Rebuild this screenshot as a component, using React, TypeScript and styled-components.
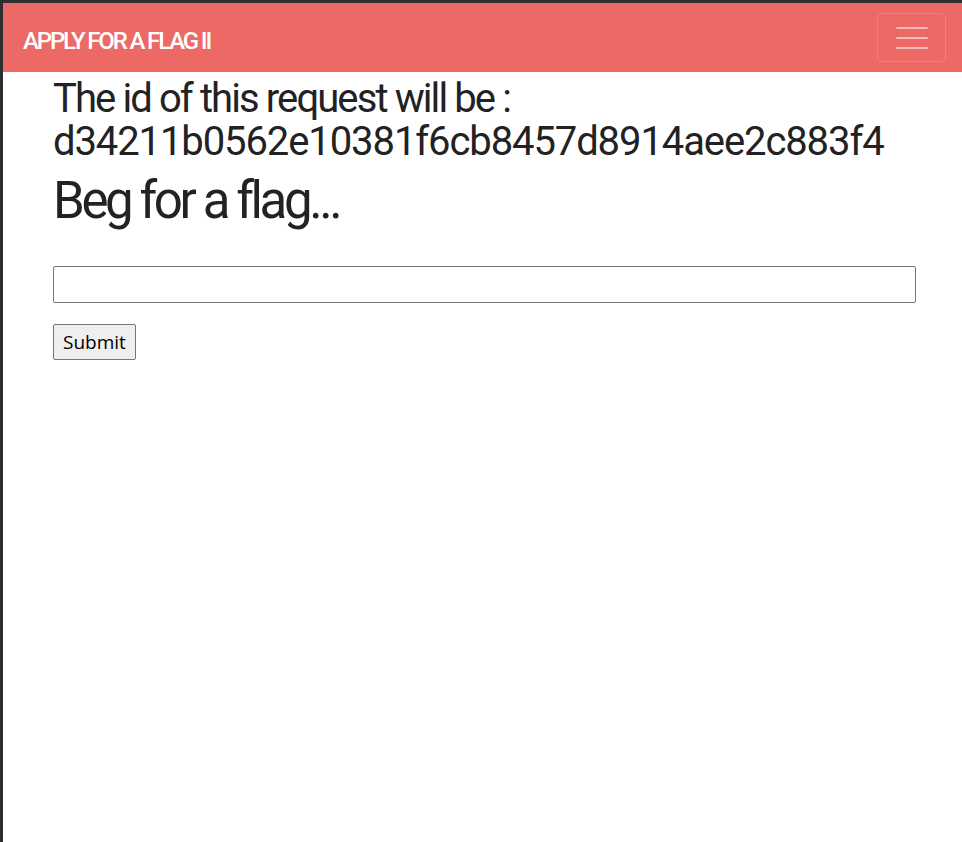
import React from 'react';
import styled, { createGlobalStyle } from 'styled-components';

const GlobalStyle = createGlobalStyle`
  html, body {
    margin: 0;
    padding: 0;
    background: #2e2e2e;
  }
`;

const Frame = styled.div`
  padding: 3px 0 0 3px;
  height: 842px;
  box-sizing: border-box;
  background: #2e2e2e;
`;

const Window = styled.div`
  background: #ffffff;
  height: 100%;
  display: flex;
  flex-direction: column;
`;

const NavBar = styled.nav`
  height: 69px;
  background: #ec6966;
  display: flex;
  align-items: center;
  justify-content: space-between;
  padding: 0 16px 0 20px;
  box-sizing: border-box;
`;

const Brand = styled.a`
  color: #ffffff;
  font-family: "Roboto", "Liberation Sans", sans-serif;
  font-size: 24px;
  font-weight: 500;
  letter-spacing: -2.15px;
  text-decoration: none;
  padding-top: 6px;
`;

const Toggler = styled.button`
  width: 69px;
  height: 49px;
  border: 1px solid rgba(255, 255, 255, 0.15);
  border-radius: 5px;
  background: transparent;
  display: flex;
  align-items: center;
  justify-content: center;
  padding: 0;
`;

const Content = styled.main`
  padding: 0 46px 0 50px;
  display: flex;
  flex-direction: column;
`;

const Heading = styled.h3<{ $size: number; $gap: number; $track: number }>`
  margin: ${(p) => p.$gap}px 0 0;
  color: #222222;
  font-family: "Roboto", "Liberation Sans", sans-serif;
  font-weight: 400;
  font-size: ${(p) => p.$size}px;
  letter-spacing: ${(p) => p.$track}px;
  line-height: ${(p) => Math.round(p.$size * 1.07)}px;
`;

const Line = styled.span<{ $track: number }>`
  display: block;
  letter-spacing: ${(p) => p.$track}px;
`;

const Form = styled.form`
  display: flex;
  flex-direction: column;
  align-items: flex-start;
  gap: 21px;
  margin-top: 38px;
`;

const TextInput = styled.input`
  width: 100%;
  height: 37px;
  box-sizing: border-box;
  border: 1px solid #767676;
  border-radius: 2px;
  font-size: 18px;
`;

const SubmitButton = styled.button`
  height: 36px;
  padding: 0 9px;
  background: #efefef;
  border: 1px solid #767676;
  border-radius: 2px;
  font-family: "Open Sans", "Noto Sans", sans-serif;
  font-size: 19px;
  color: #000000;
`;

const MenuIcon = () => (
  <svg width="32" height="24" viewBox="0 0 32 24">
    <g stroke="rgba(255,255,255,0.55)" strokeWidth="2" strokeLinecap="round">
      <line x1="1" y1="2" x2="31" y2="2" />
      <line x1="1" y1="12" x2="31" y2="12" />
      <line x1="1" y1="22" x2="31" y2="22" />
    </g>
  </svg>
);

export default function App() {
  return (
    <>
      <GlobalStyle />
      <Frame>
        <Window>
          <NavBar>
            <Brand href="#">APPLY FOR A FLAG II</Brand>
            <Toggler type="button">
              <MenuIcon />
            </Toggler>
          </NavBar>
          <Content>
            <Heading $size={40} $gap={5} $track={-1.5}>
              <Line $track={-1.9}>The id of this request will be :</Line>
              <Line $track={-1.1}>d34211b0562e10381f6cb8457d8914aee2c883f4</Line>
            </Heading>
            <Heading $size={51} $gap={10} $track={-3.4}>
              Beg for a flag...
            </Heading>
            <Form onSubmit={(e) => e.preventDefault()}>
              <TextInput type="text" />
              <SubmitButton type="submit">Submit</SubmitButton>
            </Form>
          </Content>
        </Window>
      </Frame>
    </>
  );
}
